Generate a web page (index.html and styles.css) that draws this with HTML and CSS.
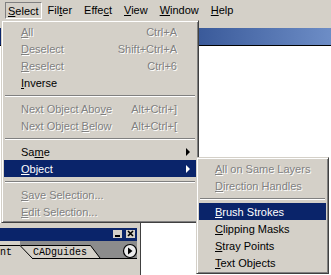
FILE: index.html
```html
<!DOCTYPE html>
<html>
  <head>
    <meta charset="UTF-8" />
    <title>Select menu</title>
    <link rel="stylesheet" href="styles.css">
  </head>
  <body>
    <div class="app">
      <div class="menubar">
        <span class="mb-item pressed"><u>S</u>elect</span>
        <span class="mb-item">Fil<u>t</u>er</span>
        <span class="mb-item">Effe<u>c</u>t</span>
        <span class="mb-item"><u>V</u>iew</span>
        <span class="mb-item"><u>W</u>indow</span>
        <span class="mb-item"><u>H</u>elp</span>
      </div>
      <div class="toolbar"></div>
      <div class="doc-title"></div>
      <div class="doc"></div>

      <!-- palette window peeking out under the menu -->
      <div class="panel">
        <div class="panel-title">
          <span class="pbtn">
            <svg width="9" height="8" viewBox="0 0 9 8"><rect x="2" y="5" width="5" height="2" fill="#000"/></svg>
          </span>
          <span class="pbtn">
            <svg width="9" height="8" viewBox="0 0 9 8"><path d="M2 1 L7 6 M7 1 L2 6" stroke="#000" stroke-width="1.6"/></svg>
          </span>
        </div>
        <svg class="tabs" width="137" height="18" viewBox="0 0 137 18">
          <rect x="0" y="0" width="137" height="18" fill="#8c8c8c"/>
          <polygon points="20,4 90,4 100,17.5 20,17.5" fill="#d4d0c8"/>
          <path d="M20 4.5 H90.5 L100 17" stroke="#000" fill="none"/>
          <path d="M33 17.5 H137" stroke="#000"/>
          <polygon points="0,0 20,0 20,4 33,18 0,18" fill="#d4d0c8"/>
          <path d="M0 4.5 H20 L33 18" stroke="#000" fill="none"/>
          <text x="0" y="14" class="tab-text">nt</text>
          <text x="33" y="14" class="tab-text">CADguides</text>
          <circle cx="130" cy="10" r="6.5" fill="#ececec" stroke="#000" stroke-width="1.2"/>
          <polygon points="128,6.5 128,13.5 132.5,10" fill="#000"/>
        </svg>
        <div class="panel-body"></div>
      </div>

      <div class="menu menu-select">
        <div class="item disabled"><span><u>A</u>ll</span><span class="key">Ctrl+A</span></div>
        <div class="item disabled"><span><u>D</u>eselect</span><span class="key">Shift+Ctrl+A</span></div>
        <div class="item disabled"><span><u>R</u>eselect</span><span class="key">Ctrl+6</span></div>
        <div class="item"><span><u>I</u>nverse</span></div>
        <div class="sep"></div>
        <div class="item disabled"><span>Next Object Abo<u>v</u>e</span><span class="key">Alt+Ctrl+]</span></div>
        <div class="item disabled"><span>Next Object <u>B</u>elow</span><span class="key">Alt+Ctrl+[</span></div>
        <div class="sep"></div>
        <div class="item has-sub"><span>Sa<u>m</u>e</span><span class="arrow"></span></div>
        <div class="item has-sub active"><span><u>O</u>bject</span><span class="arrow"></span></div>
        <div class="sep"></div>
        <div class="item disabled"><span><u>S</u>ave Selection...</span></div>
        <div class="item disabled"><span><u>E</u>dit Selection...</span></div>
      </div>

      <div class="menu menu-object">
        <div class="item disabled"><span><u>A</u>ll on Same Layers</span></div>
        <div class="item disabled"><span><u>D</u>irection Handles</span></div>
        <div class="sep"></div>
        <div class="item active"><span><u>B</u>rush Strokes</span></div>
        <div class="item"><span><u>C</u>lipping Masks</span></div>
        <div class="item"><span><u>S</u>tray Points</span></div>
        <div class="item"><span><u>T</u>ext Objects</span></div>
      </div>
    </div>
  </body>
</html>
```

FILE: styles.css
```css
body {
    margin: 0;
    background: #fff;
    font-family: "Liberation Sans", Arial, sans-serif;
    font-size: 11px;
    color: #000;
}
u { text-decoration: underline; text-underline-offset: 1px; }

.app {
    position: relative;
    width: 331px;
    height: 275px;
    overflow: hidden;
}

/* menu bar */
.menubar {
    display: flex;
    height: 20px;
    padding-left: 5px;
    background: #d4d0c8;
    box-sizing: border-box;
}
.mb-item {
    padding: 0 6px;
    margin-top: 2px;
    height: 17px;
    line-height: 16px;
    box-sizing: border-box;
}
.mb-item.pressed {
    padding: 1px 2px 0 2px;
    border: 1px solid;
    border-color: #808080 #fff #fff #808080;
    line-height: 14px;
}

.toolbar { height: 8px; background: #d4d0c8; }
.doc-title {
    height: 17px;
    background: linear-gradient(to right, #0a246a 0%, #3a5a9a 60%, #6d8dc6 100%);
    border-bottom: 1px solid #000;
}
.doc { height: 177px; background: #fff; }

/* palette */
.panel {
    width: 141px;
    background: #d4d0c8;
    border-right: 1px solid #404040;
    box-sizing: border-box;
    padding: 5px 3px 0 0;
}
.panel-title {
    display: flex;
    justify-content: flex-end;
    gap: 4px;
    height: 11px;
    padding: 2px 2px 0 0;
    background: #0a246a;
}
.pbtn {
    display: block;
    width: 9px;
    height: 8px;
    background: #d4d0c8;
}
.pbtn svg { display: block; }
.tabs { display: block; }
.tab-text {
    font-family: "Liberation Mono", "Courier New", monospace;
    font-size: 10px;
    fill: #000;
}
.panel-body { height: 20px; }

/* popup menus */
.menu {
    position: absolute;
    background: #d4d0c8;
    border: 1px solid;
    border-color: #d4d0c8 #404040 #404040 #d4d0c8;
    box-shadow: inset 1px 1px #fff, inset -1px -1px #808080;
    padding: 2px 2px;
    box-sizing: border-box;
}
.menu-select { left: 1px; top: 20px; width: 198px; }
.menu-object { left: 196px; top: 157px; width: 133px; }

.item {
    display: flex;
    align-items: center;
    height: 17px;
    padding: 0 19px 0 17px;
    white-space: nowrap;
}
.menu-object .item { padding-left: 16px; }
.item .key { margin-left: auto; }
.item.active { background: #0a246a; color: #fff; }
.item.disabled { color: #808080; text-shadow: 1px 1px 0 #fff; }
.item.has-sub { padding-right: 6px; }
.arrow {
    margin-left: auto;
    width: 0;
    height: 0;
    border-top: 4px solid transparent;
    border-bottom: 4px solid transparent;
    border-left: 4px solid #000;
}
.item.active .arrow { border-left-color: #fff; }

.sep {
    height: 0;
    margin: 4px 1px 3px;
    border-top: 1px solid #808080;
    border-bottom: 1px solid #fff;
}
```
